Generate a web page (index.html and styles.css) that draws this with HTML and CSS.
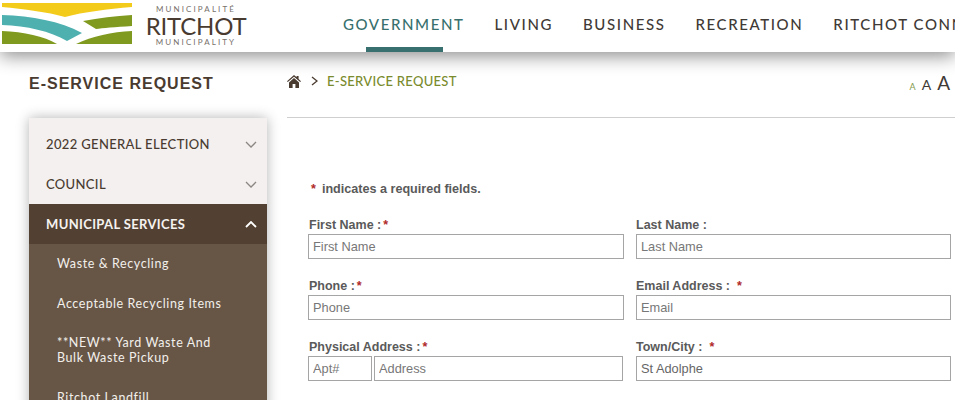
FILE: index.html
```html
<!DOCTYPE html>
<html lang="en">
<head>
  <meta charset="UTF-8" />
  <title>E-Service Request</title>
  <link rel="stylesheet" href="styles.css">
</head>
<body>
  <header class="site-header">
    <a class="logo" href="#">
      <svg class="logo-mark" width="130" height="42" viewBox="0 0 130 42">
        <path fill="#f3cb1b" d="M0 0H130V4C105 6 82 9 63 14C45 9 22 6 0 4Z"/>
        <path fill="#4fb0b0" d="M0 12C30 13 58 18 80 30L65 38C48 28 25 23 0 22Z"/>
        <path fill="#7f9a1f" d="M81 18C97 15 113 13 130 12V23C113 24 100 25 94 26Z"/>
        <path fill="#7f9a1f" d="M0 28C22 29 42 33 55 41H0Z"/>
        <path fill="#7f9a1f" d="M74 41C90 33 110 29 130 28V41Z"/>
      </svg>
      <div class="logo-text">
        <span class="logo-small">MUNICIPALITÉ</span>
        <span class="logo-name">RITCHOT</span>
        <span class="logo-small">MUNICIPALITY</span>
      </div>
    </a>
    <nav class="main-nav">
      <a class="active" href="#">GOVERNMENT</a>
      <a href="#">LIVING</a>
      <a href="#">BUSINESS</a>
      <a href="#">RECREATION</a>
      <a href="#">RITCHOT CONNECTS</a>
    </nav>
  </header>

  <div class="page">
    <aside class="sidebar">
      <h2>E-SERVICE REQUEST</h2>
      <ul class="side-menu">
        <li class="menu-item">2022 GENERAL ELECTION
          <svg class="chev" width="12" height="7" viewBox="0 0 12 7"><path d="M1 1L6 6L11 1"/></svg>
        </li>
        <li class="menu-item">COUNCIL
          <svg class="chev" width="12" height="7" viewBox="0 0 12 7"><path d="M1 1L6 6L11 1"/></svg>
        </li>
        <li class="menu-item open">MUNICIPAL SERVICES
          <svg class="chev" width="12" height="7" viewBox="0 0 12 7"><path d="M1 6L6 1L11 6"/></svg>
        </li>
        <li class="sub-item">Waste &amp; Recycling</li>
        <li class="sub-item">Acceptable Recycling Items</li>
        <li class="sub-item">**NEW** Yard Waste And Bulk Waste Pickup</li>
        <li class="sub-item">Ritchot Landfill</li>
      </ul>
    </aside>

    <main class="content">
      <div class="crumbs">
        <svg class="home" width="14" height="13" viewBox="0 0 14 13">
          <path fill="#4a3b30" d="M7 0L9.6 2.3V1H11.6V4L14 6.2L13.2 7.1L7 1.7L.8 7.1L0 6.2ZM2 7.4L7 3L12 7.4V13H8.4V9H5.6V13H2Z"/>
        </svg>
        <svg class="sep" width="7" height="10" viewBox="0 0 7 10"><path d="M1 1L6 5L1 9"/></svg>
        <span class="crumb-current">E-SERVICE REQUEST</span>
        <div class="text-size">
          <span class="size-s">A</span>
          <span class="size-m">A</span>
          <span class="size-l">A</span>
        </div>
      </div>

      <form class="request-form">
        <p class="note"><span class="req">*</span>indicates a required fields.</p>
        <div class="fields">
          <div class="field">
            <label for="first">First Name :<span class="req">*</span></label>
            <input id="first" type="text" placeholder="First Name">
          </div>
          <div class="field">
            <label for="last">Last Name :</label>
            <input id="last" type="text" placeholder="Last Name">
          </div>
          <div class="field">
            <label for="phone">Phone :<span class="req">*</span></label>
            <input id="phone" type="text" placeholder="Phone">
          </div>
          <div class="field">
            <label for="email">Email Address :<span class="req wide">*</span></label>
            <input id="email" type="text" placeholder="Email">
          </div>
          <div class="field">
            <label for="apt">Physical Address :<span class="req">*</span></label>
            <div class="address-row">
              <input id="apt" class="apt" type="text" placeholder="Apt#">
              <input class="address" type="text" placeholder="Address">
            </div>
          </div>
          <div class="field">
            <label for="town">Town/City :<span class="req wide">*</span></label>
            <input id="town" type="text" value="St Adolphe">
          </div>
        </div>
      </form>
    </main>
  </div>
</body>
</html>
```

FILE: styles.css
```css
html, body {
  height: 400px;
  overflow: hidden;
}

body {
  margin: 0;
  background: white;
  font-family: 'Liberation Sans', sans-serif;
}

.site-header {
  position: relative;
  z-index: 2;
  display: flex;
  height: 52px;
  background: white;
  box-shadow: 0 4px 18px rgba(0, 0, 0, 0.45);
  white-space: nowrap;
  overflow-x: clip;
  overflow-y: visible;
}

.logo {
  display: flex;
  width: 343px;
  padding: 3px 0 0 2px;
  box-sizing: border-box;
  text-decoration: none;
  flex: none;
}

.logo-text {
  display: flex;
  flex-direction: column;
  align-items: center;
  width: 100px;
  margin-left: 14px;
  padding-top: 2px;
  color: #4a3b30;
  font-family: Lato, sans-serif;
}

.logo-small {
  font-size: 8px;
  line-height: 9px;
  letter-spacing: 2.1px;
  color: #77706a;
}

.logo-name {
  font-size: 24px;
  line-height: 24px;
  font-weight: 400;
  letter-spacing: -0.2px;
}

.main-nav {
  display: flex;
  gap: 30px;
  font-family: Lato, sans-serif;
  font-size: 15px;
  font-weight: 500;
  letter-spacing: 1.6px;
}

.main-nav a {
  position: relative;
  padding-top: 15px;
  color: #3f3a36;
  text-decoration: none;
}

.main-nav a.active {
  color: #37706e;
}

.main-nav a.active::after {
  content: "";
  position: absolute;
  left: 23px;
  right: 22px;
  bottom: 0;
  height: 5px;
  background: #37706e;
}

.page {
  display: flex;
}

.sidebar {
  flex: none;
  width: 238px;
  margin-left: 29px;
}

.sidebar h2 {
  margin: 22px 0 25px;
  font-size: 16px;
  line-height: 19px;
  letter-spacing: 1px;
  color: #4a3b30;
}

.side-menu {
  margin: 0;
  padding: 6px 0 0;
  list-style: none;
  background: #f3f0ef;
  box-shadow: 0 0 12px rgba(0, 0, 0, 0.3);
  font-family: Lato, sans-serif;
}

.menu-item {
  display: flex;
  justify-content: space-between;
  align-items: center;
  height: 40px;
  padding: 0 10px 0 17px;
  font-size: 13px;
  font-weight: 500;
  letter-spacing: 0.35px;
  color: #4a3b30;
}

.chev {
  fill: none;
  stroke: #8c8783;
  stroke-width: 1.3;
}

.menu-item.open {
  background: #524132;
  color: #f5f2ef;
  font-weight: 700;
}

.menu-item.open .chev {
  stroke: white;
  stroke-width: 1.8;
}

.sub-item {
  padding: 12px 35px 12.5px 28px;
  background: #675646;
  color: #f3f0ec;
  font-size: 12.5px;
  line-height: 15px;
  letter-spacing: 0.6px;
}

.content {
  flex: none;
  width: 668px;
  margin-left: 20px;
}

.crumbs {
  display: flex;
  align-items: center;
  height: 58px;
  padding-bottom: 7px;
  border-bottom: 1px solid #cfcfcf;
  font-family: Lato, sans-serif;
}

.sep {
  margin-left: 10px;
  fill: none;
  stroke: #4a3b30;
  stroke-width: 1.3;
}

.crumb-current {
  margin-left: 9px;
  font-size: 13px;
  font-weight: 500;
  letter-spacing: 0.3px;
  color: #7a8b2e;
}

.text-size {
  display: flex;
  align-items: baseline;
  gap: 6px;
  margin-left: auto;
  margin-right: 5px;
  padding-top: 2px;
  color: #3f3a36;
}

.size-s {
  font-size: 9px;
  color: #7f9a4a;
}

.size-m {
  font-size: 14px;
}

.size-l {
  font-size: 19px;
}

.request-form {
  padding: 64px 4px 0 21px;
  color: #5a5a5a;
}

.note {
  margin: 0 0 21px 3px;
  font-size: 12.6px;
  line-height: 15px;
  font-weight: bold;
}

.req {
  margin-left: 2px;
  color: #b02a2a;
}

.note .req {
  margin-left: 0;
  margin-right: 6px;
}

.req.wide {
  margin-left: 7px;
}

.fields {
  display: grid;
  grid-template-columns: 316px 315px;
  column-gap: 12px;
  row-gap: 20px;
}

.field label {
  display: block;
  padding: 0 0 1px 1px;
  font-size: 12.5px;
  line-height: 15px;
  font-weight: bold;
}

.field:nth-child(even) label {
  padding-left: 0;
}

.field input {
  display: block;
  box-sizing: border-box;
  width: 100%;
  height: 25px;
  padding: 0 4px;
  border: 1px solid #a5a5a5;
  border-radius: 0;
  background: white;
  color: #666;
  font-family: 'Liberation Sans', sans-serif;
  font-size: 12.8px;
}

.field input::placeholder {
  color: #777;
  opacity: 1;
}

.address-row {
  display: flex;
  gap: 2px;
  padding-right: 1px;
}

.field input.apt {
  flex: none;
  width: 64px;
}

.field input.address {
  flex: 1;
  width: auto;
  min-width: 0;
}
```
